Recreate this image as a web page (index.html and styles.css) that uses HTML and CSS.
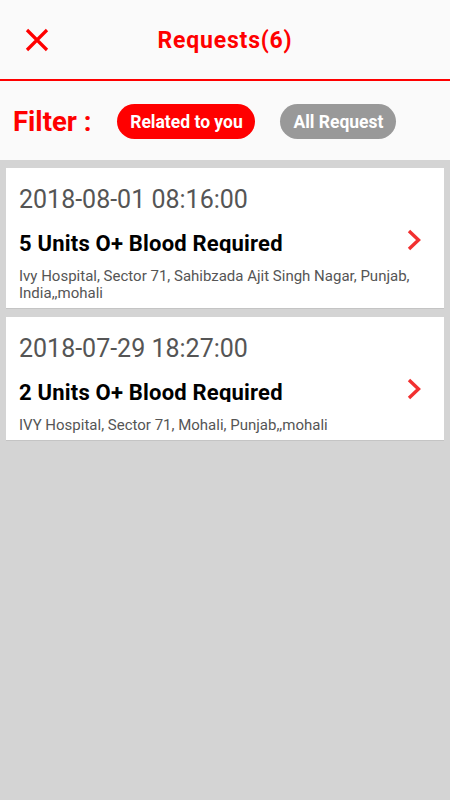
FILE: index.html
```html
<!DOCTYPE html>
<html lang="en">
<head>
<meta charset="utf-8">
<title>Requests</title>
<link rel="stylesheet" href="styles.css">
</head>
<body>
<header class="topbar">
  <span class="close" aria-label="Close">
    <svg width="24" height="24" viewBox="0 0 24 24"><path d="M2 2 L22 22 M22 2 L2 22" stroke="#ff0000" stroke-width="3.2" fill="none"/></svg>
  </span>
  <h1 class="title">Requests(6)</h1>
</header>
<section class="filter">
  <span class="filter-label">Filter :</span>
  <span class="pill pill-active">Related to you</span>
  <span class="pill pill-muted">All Request</span>
</section>
<main class="list">
  <article class="card">
    <div class="date">2018-08-01 08:16:00</div>
    <div class="row">
      <div class="headline">5 Units O+ Blood Required</div>
      <svg class="chev" width="16" height="22" viewBox="0 0 16 22"><path d="M3 2 L12.5 11 L3 20" stroke="#f23030" stroke-width="3.4" fill="none"/></svg>
    </div>
    <div class="addr">Ivy Hospital, Sector 71, Sahibzada Ajit Singh Nagar, Punjab, India,,mohali</div>
  </article>
  <article class="card">
    <div class="date">2018-07-29 18:27:00</div>
    <div class="row">
      <div class="headline">2 Units O+ Blood Required</div>
      <svg class="chev" width="16" height="22" viewBox="0 0 16 22"><path d="M3 2 L12.5 11 L3 20" stroke="#f23030" stroke-width="3.4" fill="none"/></svg>
    </div>
    <div class="addr">IVY Hospital, Sector 71, Mohali, Punjab,,mohali</div>
  </article>
</main>
</body>
</html>
```
FILE: styles.css
```css
* { box-sizing: border-box; }
html, body { margin: 0; padding: 0; }
body {
  background: #d4d4d4;
  font-family: Roboto, "Liberation Sans", sans-serif;
  width: 450px;
  min-height: 800px;
}
.topbar {
  height: 81px;
  background: #fafafa;
  border-bottom: 2px solid #ff0000;
  display: flex;
  align-items: center;
  justify-content: center;
  position: relative;
}
.close {
  position: absolute;
  left: 25px;
  top: 28px;
  width: 24px;
  height: 24px;
  display: block;
}
.close svg { display: block; }
.title {
  margin: 0;
  font-size: 23px;
  letter-spacing: 0.8px;
  font-weight: 700;
  color: #ff0000;
  padding-top: 2px;
}
.filter {
  height: 79px;
  background: #fafafa;
  display: flex;
  align-items: center;
  padding-left: 13px;
}
.filter-label {
  font-size: 27.5px;
  font-weight: 700;
  color: #ff0000;
  margin-right: 26px;
  padding-top: 2px;
}
.pill {
  height: 35px;
  border-radius: 18px;
  display: inline-flex;
  align-items: center;
  justify-content: center;
  font-size: 17.5px;
  font-weight: 700;
  color: #fff;
  padding: 0 10px;
  margin-top: 2px;
}
.pill-active { background: #ff0000; width: 138px; margin-right: 25px; }
.pill-muted { background: #999999; width: 116px; }
.list {
  padding: 8px 6px 0;
  display: flex;
  flex-direction: column;
  gap: 8px;
}
.card {
  background: #fff;
  padding: 17px 13px 6px;
  border-bottom: 1px solid #c4c4c4;
}
.date {
  font-size: 25px;
  line-height: 29px;
  color: #555;
}
.row {
  display: flex;
  align-items: flex-start;
  justify-content: space-between;
  margin-top: 17px;
}
.headline {
  font-size: 22px;
  letter-spacing: 0.2px;
  font-weight: 700;
  color: #000;
  line-height: 25px;
  height: 22px;
  overflow: hidden;
}
.chev { display: block; margin-right: 9px; margin-top: -2px; }
.addr {
  margin-top: 15px;
  font-size: 15px;
  line-height: 17px;
  color: #555;
}
```
